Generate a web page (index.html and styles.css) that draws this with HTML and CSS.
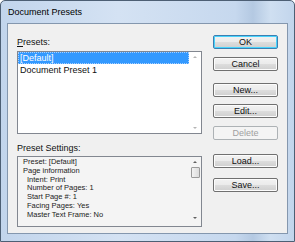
FILE: index.html
```html
<!DOCTYPE html>
<html lang="en">
<head>
  <meta charset="UTF-8">
  <title>Document Presets</title>
  <link rel="stylesheet" href="styles.css">
</head>
<body>
  <div class="window">
    <div class="titlebar">Document Presets</div>
    <div class="client">
      <div class="left">
        <div class="label"><u>P</u>resets:</div>
        <div class="listbox">
          <div class="rows">
            <div class="row selected">[Default]</div>
            <div class="row">Document Preset 1</div>
          </div>
          <div class="scroll">
            <span class="arrow up"></span>
            <span class="arrow down"></span>
          </div>
        </div>
        <div class="label settings-label">Preset Settings:</div>
        <div class="settings">
          <div class="lines">
            <div>Preset: [Default]</div>
            <div>Page information</div>
            <div class="sub">Intent: Print</div>
            <div class="sub">Number of Pages: 1</div>
            <div class="sub">Start Page #: 1</div>
            <div class="sub">Facing Pages: Yes</div>
            <div class="sub">Master Text Frame: No</div>
          </div>
          <div class="scroll">
            <span class="arrow up dark"></span>
            <span class="thumb"></span>
            <span class="arrow down dark"></span>
          </div>
        </div>
      </div>
      <div class="buttons">
        <button class="btn default">OK</button>
        <button class="btn b-cancel">Cancel</button>
        <button class="btn b-new">New...</button>
        <button class="btn b-edit">Edit...</button>
        <button class="btn b-delete" disabled>Delete</button>
        <button class="btn b-load">Load...</button>
        <button class="btn b-save">Save...</button>
      </div>
    </div>
  </div>
</body>
</html>
```

FILE: styles.css
```css
/* Reset */
html, body {
  margin: 0;
  padding: 0;
  font-family: "Liberation Sans", Arial, sans-serif;
  background: #ffffff;
}

.window {
  box-sizing: border-box;
  width: 295px;
  height: 242px;
  border: 1px solid #4d5f74;
  border-radius: 5px 5px 0 0;
  background: linear-gradient(90deg, #c2d5ec 0%, #d4e2f3 40%, #c6d8ee 80%, #b4c9e2 86%, #cfdff1 92%, #c2d5ec 100%);
  padding: 0 6px 7px 6px;
  display: flex;
  flex-direction: column;
}

.titlebar {
  height: 22px;
  line-height: 23px;
  font-size: 9px;
  color: #000;
  padding-left: 1px;
}

.client {
  flex: 1;
  display: flex;
  background: #f0f0f0;
  border: 1px solid #8497ae;
  padding: 0 0 0 9px;
}

.left {
  width: 185px;
  display: flex;
  flex-direction: column;
}

.label {
  font-size: 9px;
  line-height: 11px;
  margin-top: 13px;
  height: 11px;
  color: #111;
}

.settings-label {
  margin-top: 9px;
}

.listbox, .settings {
  box-sizing: border-box;
  border: 1px solid #828790;
  background: #ffffff;
  display: flex;
  margin-top: 3px;
}

.listbox {
  height: 83px;
}

.settings {
  height: 71px;
  margin-top: 2px;
  background: #f4f4f4;
}

.rows {
  flex: 1;
}

.row {
  height: 12px;
  line-height: 12px;
  font-size: 9px;
  padding-left: 2px;
  color: #111;
}

.row.selected {
  background: #3399ff;
  color: #fff;
  outline: 1px dotted #a8d0ff;
  outline-offset: -1px;
}

.scroll {
  width: 12px;
  display: flex;
  flex-direction: column;
  align-items: center;
  justify-content: space-between;
  padding: 4px 0;
}

.arrow {
  width: 0;
  height: 0;
  border-left: 2px solid transparent;
  border-right: 2px solid transparent;
}

.arrow.up {
  border-bottom: 2px solid #b5b5b5;
}

.arrow.down {
  border-top: 2px solid #b5b5b5;
}

.arrow.up.dark {
  border-bottom-color: #606060;
}

.arrow.down.dark {
  border-top-color: #606060;
}

.settings .scroll {
  justify-content: flex-start;
  padding: 4px 0 7px;
}

.thumb {
  box-sizing: border-box;
  width: 9px;
  height: 11px;
  margin-top: 4px;
  border: 1px solid #9a9a9a;
  border-radius: 1px;
  background: linear-gradient(90deg, #f2f2f2, #dcdcdc);
}

.settings .arrow.down {
  margin-top: auto;
}

.lines {
  flex: 1;
  padding: 1px 0 0 5px;
  font-size: 7.5px;
  line-height: 8.8px;
  color: #222;
}

.lines .sub {
  padding-left: 4px;
}

.buttons {
  display: flex;
  flex-direction: column;
  margin-left: 11px;
  width: 65px;
}

.btn {
  box-sizing: border-box;
  width: 65px;
  height: 14px;
  padding: 0;
  font-family: "Liberation Sans", Arial, sans-serif;
  font-size: 9px;
  line-height: 12px;
  color: #111;
  border: 1px solid #707070;
  border-radius: 2px;
  background: linear-gradient(#f2f2f2 0%, #ebebeb 50%, #dddddd 51%, #cfcfcf 100%);
  box-shadow: inset 0 0 0 1px #fcfcfc;
}

.btn.default {
  margin-top: 11px;
  border-color: #3c7fb1;
  box-shadow: inset 0 0 0 1px #48d4fd;
}

.b-cancel { margin-top: 8px; }
.b-new { margin-top: 12px; }
.b-edit { margin-top: 7px; }
.b-delete { margin-top: 8px; }
.b-load { margin-top: 14px; }
.b-save { margin-top: 10px; }

.btn:disabled {
  color: #a0a0a0;
  border-color: #adb2b5;
  background: #f4f4f4;
  box-shadow: none;
}
```
